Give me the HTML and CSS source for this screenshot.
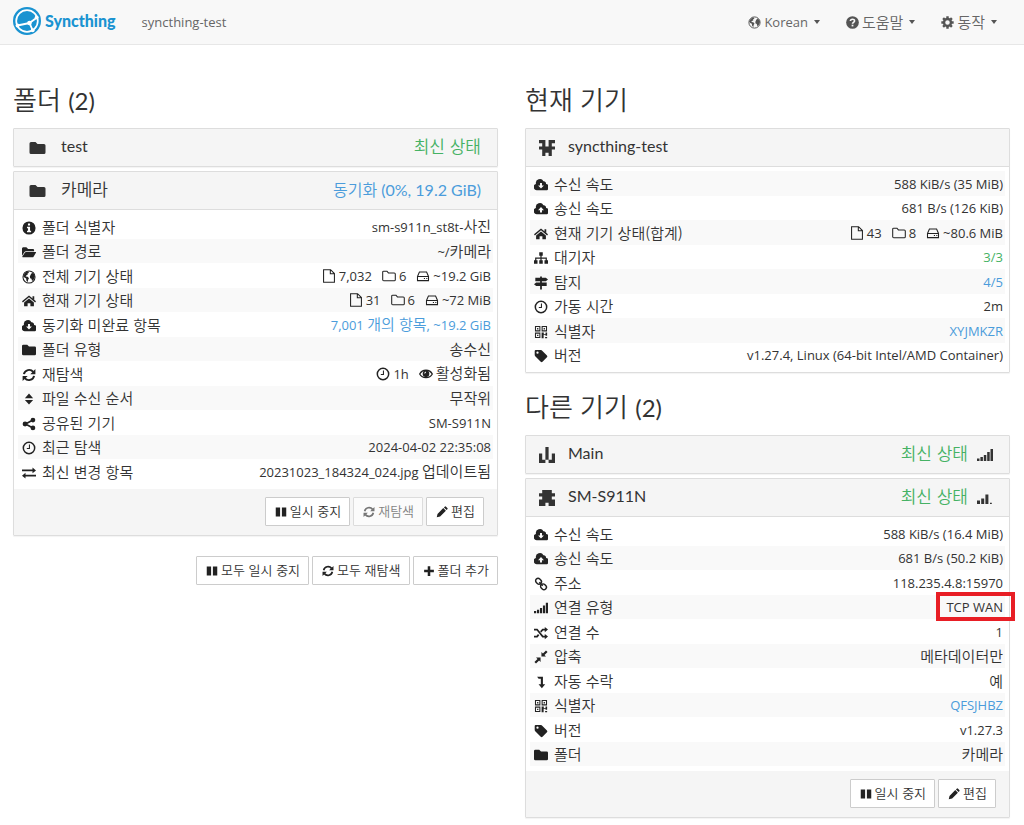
FILE: index.html
```
<!DOCTYPE html>
<html lang="ko">
<head>
    <meta charset="UTF-8">
    <meta name="viewport" content="width=device-width, initial-scale=1.0">
    <title>syncthing-test | Syncthing</title>
    <link rel="stylesheet" href="styles.css">
</head>
<body>
    <!-- icon sprite -->
    <svg class="sprite" aria-hidden="true">
        <symbol id="folder" viewBox="0 0 16 16"><path d="M1.5 2H6l2 2h6.500a1.500 1.500 0 0 1 1.500 1.500v7a1.500 1.500 0 0 1-1.500 1.500h-13A1.500 1.500 0 0 1 0 12.500v-9A1.500 1.500 0 0 1 1.500 2z"/></symbol>
        <symbol id="folder-open" viewBox="0 0 16 16"><path d="M1.300 2.500H5l2 2h5.500A1.300 1.300 0 0 1 13.800 6v1H4.500a2 2 0 0 0-1.700 1L0 12.300V4a1.500 1.500 0 0 1 1.300-1.500zM4.500 8H15.500c.5 0 .7.500.4.900l-2.700 4.500a1.300 1.300 0 0 1-1.100.6H.8c-.5 0-.7-.5-.4-.9l3-4.500A1.300 1.300 0 0 1 4.500 8z"/></symbol>
        <symbol id="info" viewBox="0 0 16 16"><path fill-rule="evenodd" d="M8 .5a7.500 7.500 0 1 0 0 15 7.500 7.500 0 0 0 0-15zM6.800 2.800h2.400v2.300H6.800zM5.700 6.500h3.500v4.500h1.200v1.800H5.700V11h1.200V8.300H5.700z"/></symbol>
        <symbol id="globe" viewBox="0 0 16 16"><circle cx="8" cy="8" r="6.900" fill="none" stroke="currentColor" stroke-width="1.200"/><path d="M3 4L5.500 1.800l2.500.2-.5 1.500L6.200 4.300l.3 1.200-1.800.8-.5 1.200 2.300.3 1.500 1.500-1 1.800-.4 2.500-1.500-1.200-.4-2.800L2.800 8.500 1.300 7zM10 5l1.500-2L13.800 4.500l1 3-1.500 3.500-1.800 1.500-.7-2.600L9.300 9.300l-.3-2z"/></symbol>
        <symbol id="home" viewBox="0 0 16 16"><path d="M8 1.700l8 6.700-1 1.200-7-5.900-7 5.900-1-1.200zM12 2.500h2v4l-2-1.700zM8 5l5.600 4.700V14H9.600v-3.500H6.400V14h-4V9.700z"/></symbol>
        <symbol id="cloud-down" viewBox="0 0 16 16"><path fill-rule="evenodd" d="M3.800 14A3.700 3.700 0 0 1 2.200 6.800 4.600 4.600 0 0 1 10.800 3.800a2.700 2.700 0 0 1 3 3A3.600 3.600 0 0 1 12.700 14zM6.900 5.800v2.700H4.700L8 12l3.300-3.500H9.100V5.800z"/></symbol>
        <symbol id="cloud-up" viewBox="0 0 16 16"><path fill-rule="evenodd" d="M3.800 14A3.700 3.700 0 0 1 2.200 6.800 4.600 4.600 0 0 1 10.800 3.800a2.700 2.700 0 0 1 3 3A3.600 3.600 0 0 1 12.700 14zM6.900 12V9.300H4.700L8 5.800l3.300 3.500H9.100V12z"/></symbol>
        <symbol id="refresh" viewBox="0 0 16 16"><path fill="none" stroke="currentColor" stroke-width="2.200" d="M2.200 7A6 6 0 0 1 12.800 4.500M13.800 9A6 6 0 0 1 3.200 11.500"/><path d="M15.300 1.200V7H9.500zM.7 14.800V9h5.800z"/></symbol>
        <symbol id="sort" viewBox="0 0 16 16"><path d="M3.300 7L8 1.800 12.700 7zM3.300 9h9.400L8 14.200z"/></symbol>
        <symbol id="share" viewBox="0 0 16 16"><path fill="none" stroke="currentColor" stroke-width="1.900" d="M12.500 3.500L4 8l8.500 4.500"/><circle cx="12.500" cy="3.500" r="2.700"/><circle cx="3.500" cy="8" r="2.800"/><circle cx="12.500" cy="12.500" r="2.700"/></symbol>
        <symbol id="clock" viewBox="0 0 16 16"><circle cx="8" cy="8" r="6.500" fill="none" stroke="currentColor" stroke-width="1.700"/><path fill="none" stroke="currentColor" stroke-width="1.200" d="M8.500 4v4.500H5.500"/></symbol>
        <symbol id="exchange" viewBox="0 0 16 16"><path d="M0 4.100h12V1.800L16 5.100l-4 3.200V6.100H0zM16 9.900H4V7.800L0 11l4 3.200v-2.300h12z"/></symbol>
        <symbol id="file-o" viewBox="0 0 16 16"><path fill="none" stroke="currentColor" stroke-width="1.200" d="M1.800.8h8l4.400 4.400v10H1.800zM9.500.8v4.700h4.700"/></symbol>
        <symbol id="folder-o" viewBox="0 0 16 16"><path fill="none" stroke="currentColor" stroke-width="1.200" d="M2 2.500h3.700l1.600 2H14a1.200 1.200 0 0 1 1.200 1.200v6.500a1.200 1.200 0 0 1-1.200 1.200H2a1.200 1.200 0 0 1-1.200-1.200V3.700A1.200 1.200 0 0 1 2 2.500z"/></symbol>
        <symbol id="hdd" viewBox="0 0 16 16"><path fill="none" stroke="currentColor" stroke-width="1.200" d="M1.700 8.500L3.900 3.500h8.200l2.200 5v4.800H1.700zM1.700 8.500h12.600"/><path d="M9 10.200h1.300v1.300H9zM11.700 10.200H13v1.300h-1.300z"/></symbol>
        <symbol id="eye" viewBox="0 0 16 16"><path fill="none" stroke="currentColor" stroke-width="1.500" d="M.8 8C3.800 2.300 12.200 2.300 15.200 8 12.200 13.500 3.800 13.500.8 8z"/><path fill-rule="evenodd" d="M8 4a3.800 3.800 0 1 0 0 7.600A3.800 3.800 0 0 0 8 4zM6 7.500C6 6 7 5.300 8 5.300v1A1.500 1.500 0 0 0 7 7.500z"/></symbol>
        <symbol id="pause" viewBox="0 0 16 16"><path d="M1 2h5.800v12H1zM9.200 2H15v12H9.200z"/></symbol>
        <symbol id="pencil" viewBox="0 0 16 16"><path d="M1 15l1-4.500L9.700 2.800l3.500 3.500L5.500 14zM10.600 1.900l1-1a1.300 1.300 0 0 1 1.800 0l1.700 1.700a1.300 1.300 0 0 1 0 1.800l-1 1z"/></symbol>
        <symbol id="plus" viewBox="0 0 16 16"><path d="M6.300 1.500h3.400v4.800h4.800v3.400H9.700v4.800H6.300V9.700H1.500V6.300h4.800z"/></symbol>
        <symbol id="question" viewBox="0 0 16 16"><circle cx="8" cy="8" r="7.800"/><path fill="none" stroke="#f8f8f8" stroke-width="2" d="M5.400 6.200C5.600 3.200 10.600 3.300 10.500 6c0 1.800-2.500 1.700-2.500 3.600"/><path fill="#f8f8f8" d="M6.900 10.700h2.200v2.100H6.900z"/></symbol>
        <symbol id="cog" viewBox="0 0 16 16"><circle cx="8" cy="8" r="4.300" fill="none" stroke="currentColor" stroke-width="3"/><path fill="none" stroke="currentColor" stroke-width="3" d="M8 .4V3M8 13v2.600M.4 8H3M13 8h2.600M2.600 2.600l1.800 1.800M11.600 11.600l1.800 1.800M2.600 13.400l1.800-1.800M11.600 4.400l1.800-1.800"/></symbol>
        <symbol id="sitemap" viewBox="0 0 16 16"><path d="M6 1.500h4v4H6zM0 10.500h4v4H0zM6 10.500h4v4H6zM12 10.500h4v4h-4zM7.300 5.500h1.400v2H14.700v3h-1.400V8.900H8.700v1.600H7.300V8.900H2.700v1.600H1.300v-3h6z"/></symbol>
        <symbol id="signs" viewBox="0 0 16 16"><path d="M7 .5h2V2h4.500L16 4l-2.500 2H9v1.300h5.500v4H9v4.200H7v-4.200H2.500L0 9.300l2.500-2H7V6H1.500V2H7z"/></symbol>
        <symbol id="qrcode" viewBox="0 0 16 16"><path fill="none" stroke="currentColor" stroke-width="1.200" d="M1.700 1.700h5v5h-5zM9.300 1.700h5v5h-5zM1.700 9.300h5v5h-5z"/><path d="M3.500 3.500H5V5H3.500zM11 3.500h1.500V5H11zM3.500 11H5v1.500H3.500zM8.700 8.700h2.500v1.500h2V8.700H15v3.500h-1.800v-1H11V15H8.700zM12.700 13.700H15V15h-2.300z"/></symbol>
        <symbol id="tag" viewBox="0 0 16 16"><path fill-rule="evenodd" d="M.8 2.200A1.300 1.300 0 0 1 2 1h5.500l1.300.5 6 6a1.400 1.400 0 0 1 0 2L9.700 14.700a1.400 1.400 0 0 1-2 0l-6.300-6.300-.6-1.300zM4 2.900a1.300 1.300 0 1 0 0 2.600 1.300 1.300 0 0 0 0-2.600z"/></symbol>
        <symbol id="link" viewBox="0 0 16 16"><g fill="none" stroke="currentColor" stroke-width="1.700"><rect x="1.500" y="2" width="7" height="5.500" rx="2.700" transform="rotate(45 5 5)"/><rect x="7.500" y="8.500" width="7" height="5.500" rx="2.700" transform="rotate(45 11 11)"/><path d="M6 6l4 4"/></g></symbol>
        <symbol id="signal" viewBox="0 0 16 16"><path d="M0 11.500h2.500V14H0zM3.400 10h2.500v4H3.400zM6.800 8h2.500v6H6.800zM10.200 5h2.500v9h-2.500zM13.500 2H16v12h-2.500z"/></symbol>
        <symbol id="signal-3" viewBox="0 0 16 16"><path d="M0 10.500h3V14H0zM4.200 8.500h3V14h-3zM8.400 4.500h3V14h-3zM13 12.800h1.800V14H13z"/></symbol>
        <symbol id="random" viewBox="0 0 16 16"><path fill="none" stroke="currentColor" stroke-width="2" d="M0 4h3.500l6.500 8h3M0 12h3.500l1.800-2.200M7.700 6.700L10 4h3"/><path d="M12.300 1l3.700 3-3.700 3zM12.300 9l3.700 3-3.700 3z"/></symbol>
        <symbol id="compress" viewBox="0 0 16 16"><path d="M8.500 7.500V2.300l1.700 1.700L13.700.5l1.800 1.800L12 5.800l1.700 1.700zM7.500 8.500v5.200L5.800 12l-3.500 3.500-1.800-1.800L4 10.200 2.300 8.500z"/></symbol>
        <symbol id="level-down" viewBox="0 0 16 16"><path d="M3.500 2h6.700v8.500h2.600L9 15 5.200 10.500h2.600V4.200H5.300z"/></symbol>
        <symbol id="id-local" viewBox="0 0 5 5"><path d="M0 0h2v2h1V0M3 0h2v1H4v1h1v1H4v2H3V4H2v1H1V3H0V2h1V1H0z" fill="none"/><path d="M0 0h2v2h1V0h2v1H4v1h1v1H4v2H3V4H2v1H1V3H0V2h1V1H0z"/></symbol>
        <symbol id="id-main" viewBox="0 0 5 5"><path d="M2 0h1v4H2zM0 2h1v2h1v1H0zM4 2h1v3H3V4h1z"/></symbol>
        <symbol id="id-phone" viewBox="0 0 5 5"><path d="M1 0h3v1h1v1H4v1h1v2H3V4H2v1H0V3h1V2H0V1h1z"/></symbol>
    </svg>

    <nav class="navbar">
        <a class="logo" href="#">
            <svg class="logo-mark" viewBox="0 0 28 28" aria-hidden="true">
                <circle cx="14" cy="14" r="14" fill="#1a93d1"/>
                <circle cx="14" cy="14" r="10.800" fill="none" stroke="#fff" stroke-width="1.700"/>
                <path d="M16.500 16L24 10.500M16.500 16L4.500 18.500M16.500 16L19.500 23" fill="none" stroke="#fff" stroke-width="1.900"/>
                <circle cx="16.500" cy="16" r="2.300" fill="#fff"/>
                <circle cx="23.700" cy="10.300" r="1.900" fill="#fff"/>
                <circle cx="4.500" cy="18.500" r="1.900" fill="#fff"/>
                <circle cx="19.700" cy="23.300" r="1.900" fill="#fff"/>
            </svg>
            <span>Syncthing</span>
        </a>
        <span class="device-name">syncthing-test</span>
        <div class="menu">
            <button type="button"><svg class="icon"><use href="#globe"/></svg><span>Korean</span><i class="caret"></i></button>
            <button type="button"><svg class="icon"><use href="#question"/></svg><span class="ko">도움말</span><i class="caret"></i></button>
            <button type="button"><svg class="icon"><use href="#cog"/></svg><span class="ko">동작</span><i class="caret"></i></button>
        </div>
    </nav>

    <main class="container">
        <section class="column">
            <h3>폴더 <span class="count">(2)</span></h3>
            <div class="panel">
                <button type="button" class="panel-heading">
                    <svg class="panel-icon"><use href="#folder"/></svg>
                    <span class="title">test</span>
                    <span class="status ko success">최신 상태</span>
                </button>
            </div>
            <div class="panel">
                <button type="button" class="panel-heading">
                    <svg class="panel-icon"><use href="#folder"/></svg>
                    <span class="title ko">카메라</span>
                    <span class="status info"><span class="ko">동기화</span> (0%, 19.2 GiB)</span>
                </button>
                <div class="panel-body">
                    <table class="striped-even">
                        <tr><th><svg class="icon"><use href="#info"/></svg>폴더 식별자</th><td>sm-s911n_st8t-<span class="ko">사진</span></td></tr>
                        <tr><th><svg class="icon"><use href="#folder-open"/></svg>폴더 경로</th><td>~/<span class="ko">카메라</span></td></tr>
                        <tr><th><svg class="icon"><use href="#globe"/></svg>전체 기기 상태</th><td><span class="stat"><svg class="icon"><use href="#file-o"/></svg>7,032</span><span class="stat"><svg class="icon"><use href="#folder-o"/></svg>6</span><span class="stat"><svg class="icon"><use href="#hdd"/></svg>~19.2 GiB</span></td></tr>
                        <tr><th><svg class="icon"><use href="#home"/></svg>현재 기기 상태</th><td><span class="stat"><svg class="icon"><use href="#file-o"/></svg>31</span><span class="stat"><svg class="icon"><use href="#folder-o"/></svg>6</span><span class="stat"><svg class="icon"><use href="#hdd"/></svg>~72 MiB</span></td></tr>
                        <tr><th><svg class="icon"><use href="#cloud-down"/></svg>동기화 미완료 항목</th><td><a href="#">7,001 <span class="ko">개의 항목</span>, ~19.2 GiB</a></td></tr>
                        <tr><th><svg class="icon"><use href="#folder"/></svg>폴더 유형</th><td class="ko">송수신</td></tr>
                        <tr><th><svg class="icon"><use href="#refresh"/></svg>재탐색</th><td><span class="stat"><svg class="icon"><use href="#clock"/></svg>1h</span><span class="stat ko"><svg class="icon"><use href="#eye"/></svg>활성화됨</span></td></tr>
                        <tr><th><svg class="icon"><use href="#sort"/></svg>파일 수신 순서</th><td class="ko">무작위</td></tr>
                        <tr><th><svg class="icon"><use href="#share"/></svg>공유된 기기</th><td>SM-S911N</td></tr>
                        <tr><th><svg class="icon"><use href="#clock"/></svg>최근 탐색</th><td>2024-04-02 22:35:08</td></tr>
                        <tr><th><svg class="icon"><use href="#exchange"/></svg>최신 변경 항목</th><td>20231023_184324_024.jpg <span class="ko">업데이트됨</span></td></tr>
                    </table>
                </div>
                <div class="panel-footer">
                    <button type="button" class="btn"><svg class="icon"><use href="#pause"/></svg>일시 중지</button>
                    <button type="button" class="btn" disabled><svg class="icon"><use href="#refresh"/></svg>재탐색</button>
                    <button type="button" class="btn"><svg class="icon"><use href="#pencil"/></svg>편집</button>
                </div>
            </div>
            <div class="actions">
                <button type="button" class="btn"><svg class="icon"><use href="#pause"/></svg>모두 일시 중지</button>
                <button type="button" class="btn"><svg class="icon"><use href="#refresh"/></svg>모두 재탐색</button>
                <button type="button" class="btn"><svg class="icon"><use href="#plus"/></svg>폴더 추가</button>
            </div>
        </section>

        <section class="column">
            <h3>현재 기기</h3>
            <div class="panel">
                <button type="button" class="panel-heading">
                    <svg class="panel-icon identicon"><use href="#id-local"/></svg>
                    <span class="title">syncthing-test</span>
                </button>
                <div class="panel-body">
                    <table class="striped-odd">
                        <tr><th><svg class="icon"><use href="#cloud-down"/></svg>수신 속도</th><td>588 KiB/s (35 MiB)</td></tr>
                        <tr><th><svg class="icon"><use href="#cloud-up"/></svg>송신 속도</th><td>681 B/s (126 KiB)</td></tr>
                        <tr><th><svg class="icon"><use href="#home"/></svg>현재 기기 상태(합계)</th><td><span class="stat"><svg class="icon"><use href="#file-o"/></svg>43</span><span class="stat"><svg class="icon"><use href="#folder-o"/></svg>8</span><span class="stat"><svg class="icon"><use href="#hdd"/></svg>~80.6 MiB</span></td></tr>
                        <tr><th><svg class="icon"><use href="#sitemap"/></svg>대기자</th><td><a class="success" href="#">3/3</a></td></tr>
                        <tr><th><svg class="icon"><use href="#signs"/></svg>탐지</th><td><a href="#">4/5</a></td></tr>
                        <tr><th><svg class="icon"><use href="#clock"/></svg>가동 시간</th><td>2m</td></tr>
                        <tr><th><svg class="icon"><use href="#qrcode"/></svg>식별자</th><td><a href="#">XYJMKZR</a></td></tr>
                        <tr><th><svg class="icon"><use href="#tag"/></svg>버전</th><td>v1.27.4, Linux (64-bit Intel/AMD Container)</td></tr>
                    </table>
                </div>
            </div>

            <h3>다른 기기 <span class="count">(2)</span></h3>
            <div class="panel">
                <button type="button" class="panel-heading">
                    <svg class="panel-icon identicon"><use href="#id-main"/></svg>
                    <span class="title">Main</span>
                    <span class="status ko success">최신 상태</span>
                    <svg class="bars"><use href="#signal"/></svg>
                </button>
            </div>
            <div class="panel">
                <button type="button" class="panel-heading">
                    <svg class="panel-icon identicon"><use href="#id-phone"/></svg>
                    <span class="title">SM-S911N</span>
                    <span class="status ko success">최신 상태</span>
                    <svg class="bars"><use href="#signal-3"/></svg>
                </button>
                <div class="panel-body">
                    <table class="striped-even">
                        <tr><th><svg class="icon"><use href="#cloud-down"/></svg>수신 속도</th><td>588 KiB/s (16.4 MiB)</td></tr>
                        <tr><th><svg class="icon"><use href="#cloud-up"/></svg>송신 속도</th><td>681 B/s (50.2 KiB)</td></tr>
                        <tr><th><svg class="icon"><use href="#link"/></svg>주소</th><td>118.235.4.8:15970</td></tr>
                        <tr><th><svg class="icon"><use href="#signal"/></svg>연결 유형</th><td><span class="marked">TCP WAN</span></td></tr>
                        <tr><th><svg class="icon"><use href="#random"/></svg>연결 수</th><td>1</td></tr>
                        <tr><th><svg class="icon"><use href="#compress"/></svg>압축</th><td class="ko">메타데이터만</td></tr>
                        <tr><th><svg class="icon"><use href="#level-down"/></svg>자동 수락</th><td class="ko">예</td></tr>
                        <tr><th><svg class="icon"><use href="#qrcode"/></svg>식별자</th><td><a href="#">QFSJHBZ</a></td></tr>
                        <tr><th><svg class="icon"><use href="#tag"/></svg>버전</th><td>v1.27.3</td></tr>
                        <tr><th><svg class="icon"><use href="#folder"/></svg>폴더</th><td class="ko">카메라</td></tr>
                    </table>
                </div>
                <div class="panel-footer">
                    <button type="button" class="btn"><svg class="icon"><use href="#pause"/></svg>일시 중지</button>
                    <button type="button" class="btn"><svg class="icon"><use href="#pencil"/></svg>편집</button>
                </div>
            </div>
        </section>
    </main>
</body>
</html>
```
FILE: styles.css
```
* {
    box-sizing: border-box;
}
body {
    margin: 0;
    background-color: #fff;
    color: #333;
    font-family: "Open Sans", "Noto Sans CJK KR", sans-serif;
    font-size: 13px;
    line-height: 20px;
}
button {
    font: inherit;
    color: inherit;
    cursor: pointer;
}
a {
    color: #4b9cdb;
    text-decoration: none;
}
.success {
    color: #45b264;
}
.info {
    color: #4b9cdb;
}
.sprite {
    display: none;
}
svg {
    fill: currentColor;
}
.ko {
    font-family: "Noto Sans CJK KR", sans-serif;
    font-size: 15px;
    font-weight: 350;
}
.icon {
    width: 14px;
    height: 14px;
    vertical-align: -2px;
    color: #222;
}

/* top bar */
.navbar {
    display: flex;
    align-items: center;
    height: 45px;
    padding: 0 27px 0 13px;
    background-color: #f8f8f8;
    border-bottom: 1px solid #e7e7e7;
    color: #666;
}
.logo {
    display: flex;
    align-items: center;
    gap: 4px;
    padding-bottom: 2px;
    color: #1a93d1;
    font-family: Lato, sans-serif;
    font-size: 16px;
    font-weight: 900;
}
.logo-mark {
    width: 28px;
    height: 28px;
}
.device-name {
    margin-left: 26px;
}
.menu {
    display: flex;
    gap: 26px;
    margin-left: auto;
}
.menu button {
    display: flex;
    align-items: center;
    gap: 3px;
    padding: 0;
    border: 0;
    background: none;
}
.menu .icon {
    width: 13px;
    height: 13px;
    color: #555;
}
.caret {
    margin-left: 3px;
    border-top: 4px solid #555;
    border-left: 3px solid transparent;
    border-right: 3px solid transparent;
}

/* layout */
.container {
    display: flex;
    gap: 27px;
    padding: 36px 14px 0 13px;
}
.column {
    flex: 1;
    min-width: 0;
}
h3 {
    margin: 0 0 11px;
    font-family: "Noto Sans CJK KR", sans-serif;
    font-size: 26px;
    font-weight: 350;
    line-height: 36px;
}
.count {
    font-family: Lato, sans-serif;
    font-size: 24px;
    font-weight: 400;
    line-height: 20px;
}

/* panels */
.panel {
    margin-bottom: 4px;
    border: 1px solid #ddd;
    border-radius: 1px;
    box-shadow: 0 1px 1px rgba(0,0,0,0.05);
}
.panel + h3 {
    margin-top: 15px;
}
.panel-heading {
    display: flex;
    align-items: center;
    width: 100%;
    height: 37px;
    padding: 0 16px 0 12px;
    border: 0;
    background-color: #f5f5f5;
    text-align: left;
}
.panel-icon {
    width: 23px;
    height: 16px;
    margin-right: 12px;
}
.identicon {
    width: 18px;
    height: 16px;
}
.title,
.status {
    padding-bottom: 3px;
    font-family: Lato, "Noto Sans CJK KR", sans-serif;
    font-size: 16px;
}
.status {
    margin-left: auto;
}
.status .ko {
    font-size: 16px;
}
.title.ko,
.status.ko {
    font-family: "Noto Sans CJK KR", sans-serif;
    font-size: 17px;
}
.bars {
    width: 16px;
    height: 16px;
    margin-left: 9px;
}
.panel-body {
    padding: 4px 4px 5px;
    border-top: 1px solid #ddd;
}
table {
    width: 100%;
    border-collapse: collapse;
}
tr {
    height: 24px;
}
tr:nth-child(odd) {
    height: 25px;
}
.striped-even tr:nth-child(even),
.striped-odd tr:nth-child(odd) {
    background-color: #f9f9f9;
}
th,
td {
    padding: 0 2px 0 4px;
    white-space: nowrap;
}
th {
    text-align: left;
    font-family: "Noto Sans CJK KR", sans-serif;
    font-size: 15px;
    font-weight: 350;
}
th .icon {
    margin-right: 6px;
}
td {
    text-align: right;
}
.stat {
    margin-left: 10px;
}
.stat .icon {
    margin-right: 3px;
}
.marked {
    position: relative;
}
/* callout frame around the value */
.marked::after {
    content: "";
    position: absolute;
    inset: -6px -12px -5px -10px;
    border: 4px solid #e81e25;
}
.panel-footer {
    display: flex;
    justify-content: flex-end;
    gap: 3px;
    padding: 8px 13px 9px;
    background-color: #f5f5f5;
}
.actions {
    display: flex;
    justify-content: flex-end;
    gap: 3px;
    margin-top: 20px;
}
.btn {
    height: 29px;
    padding: 0 8px 2px 9px;
    border: 1px solid #ccc;
    border-radius: 1px;
    background-color: #fff;
    font-family: "Noto Sans CJK KR", sans-serif;
    font-size: 13px;
    font-weight: 350;
    white-space: nowrap;
}
.btn .icon {
    width: 12px;
    height: 12px;
    margin-right: 3px;
}
.btn:disabled {
    opacity: 0.6;
    cursor: default;
}
```
